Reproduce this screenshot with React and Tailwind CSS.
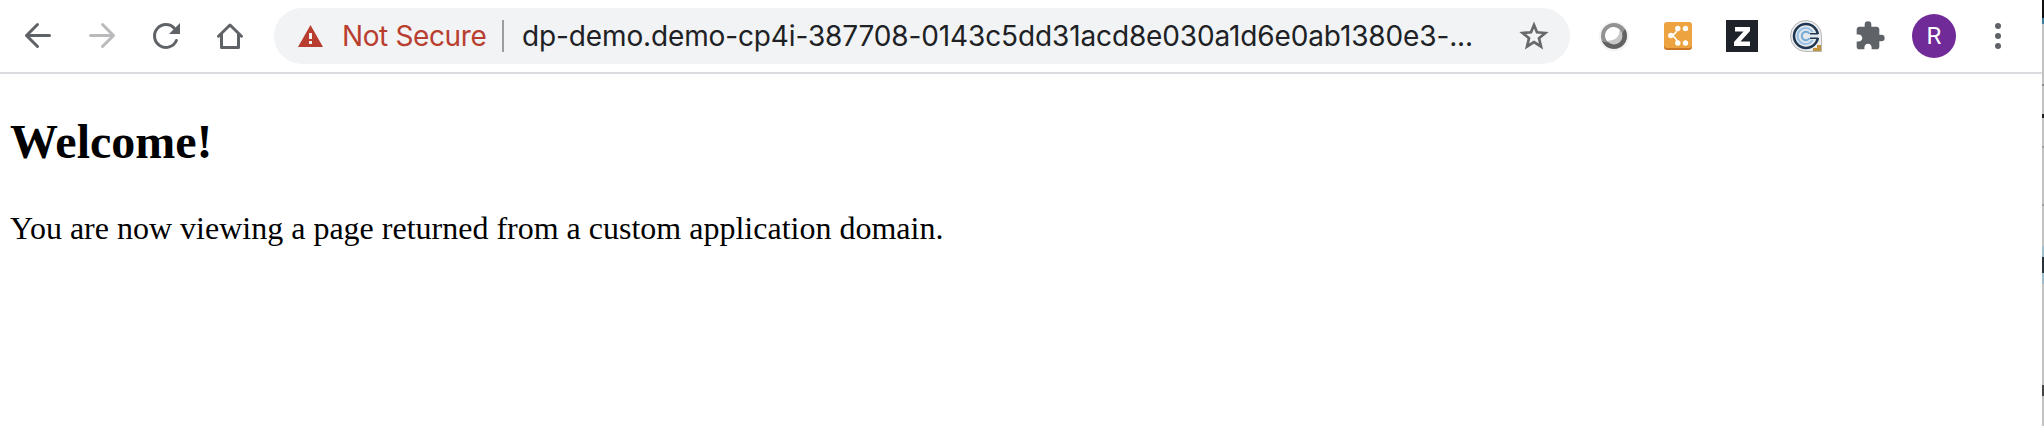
const iconButton = "h-8 w-8 shrink-0";

function Navigation() {
  return (
    <nav className="flex w-[274px] shrink-0 items-center gap-8 pl-[22px]">
      <svg className={iconButton} viewBox="0 0 32 32" fill="none" stroke="#5f6368" strokeWidth="3" strokeLinecap="round" strokeLinejoin="round">
        <path d="M27.5 15.5H4.5M15.5 4.5L4.5 15.5L15.5 26.5" />
      </svg>
      <svg className={iconButton} viewBox="0 0 32 32" fill="none" stroke="#bababc" strokeWidth="3" strokeLinecap="round" strokeLinejoin="round">
        <path d="M4.5 15.5H27.5M16.5 4.5L27.5 15.5L16.5 26.5" />
      </svg>
      <svg className={iconButton} viewBox="0 0 32 32" fill="none" stroke="#5f6368" strokeWidth="3" strokeLinecap="round">
        <path d="M26.4 20.5A11.4 11.4 0 1 1 24.5 8.5" />
        <path d="M30 3V14H19Z" fill="#5f6368" stroke="none" />
      </svg>
      <svg className={iconButton} viewBox="0 0 32 32" fill="none" stroke="#5f6368" strokeWidth="3" strokeLinecap="round" strokeLinejoin="round">
        <path d="M4.5 16.2L16 5L27.500 16.200M7.500 14V27.500H24.500V14" />
      </svg>
    </nav>
  );
}

function AddressBar() {
  return (
    <div className="flex h-14 w-[1296px] shrink-0 items-center rounded-full bg-[#f1f3f4] pl-6 font-['Inter',sans-serif] text-[28px] leading-none">
      <svg className="h-[22px] w-[25px] shrink-0" viewBox="0 0 25 22">
        <path d="M12.5 0L25 22H0Z" fill="#b83d2e" />
        <path d="M11 8H14V14H11ZM11 16H14V19H11Z" fill="#f1f3f4" />
      </svg>
      <span className="ml-[19px] w-[160px] whitespace-nowrap tracking-[-0.38px] text-[#b93e30]">Not Secure</span>
      <span className="h-8 w-0.5 shrink-0 bg-[#9b9da0]" />
      <span className="ml-[18px] w-[996px] whitespace-nowrap tracking-[-0.13px] text-[#202124]">dp-demo.demo-cp4i-387708-0143c5dd31acd8e030a1d6e0ab1380e3-...</span>
      <svg className="h-8 w-8 shrink-0" viewBox="0 0 32 32" fill="none" stroke="#66686b" strokeWidth="2.7">
        <path d="M16 5L19 12.300L27.300 13L21 18.300L23 26.500L16 22.100L9 26.500L11 18.300L4.700 13L13 12.300Z" />
      </svg>
    </div>
  );
}

function Extensions() {
  return (
    <div className="flex items-center pl-7">
      <svg className="h-8 w-8" viewBox="0 0 32 32">
        <circle cx="16" cy="16.500" r="15" fill="#f3f3f3" />
        <circle cx="16" cy="16" r="13" fill="#929292" />
        <path d="M27 9A13 13 0 1 1 4 21Q17 27 27 9Z" fill="#626262" />
        <circle cx="16" cy="16" r="8.500" fill="#c7c7c7" />
        <path d="M21.500 9.500Q22 20 9 21A8.500 8.500 0 0 1 21.500 9.500Z" fill="#fff" />
      </svg>
      <svg className="ml-8 h-8 w-8" viewBox="0 0 32 32">
        <rect x="2" y="3" width="28" height="27" rx="3" fill="#cb7728" />
        <rect x="2" y="2" width="28" height="26" rx="3" fill="#eda33f" />
        <path d="M15.500 8.500Q14.500 14 9 15.500Q14.500 17 15.500 23" fill="none" stroke="#fff" strokeWidth="1.500" />
        <g fill="#fff"><circle cx="15.800" cy="8.500" r="2.700" /><circle cx="23.500" cy="8.500" r="2.700" /><circle cx="8.800" cy="15.500" r="2.700" /><circle cx="15.800" cy="23" r="2.700" /><circle cx="23.500" cy="23" r="2.700" /></g>
      </svg>
      <svg className="ml-8 h-8 w-8" viewBox="0 0 32 32">
        <path d="M0 0H32V32H0Z" fill="#1e232a" />
        <path d="M9 7H24V11L14.500 21.500H24V26H8V22L17.500 11.500H9Z" fill="#fff" />
      </svg>
      <svg className="ml-8 h-8 w-8" viewBox="0 0 32 32">
        <path d="M16 .5A15.500 15.500 0 0 0 16 31.500H31.500V16A15.500 15.500 0 0 0 16 .5Z" fill="#ededed" stroke="#b8b8b8" />
        <circle cx="16" cy="16" r="12" fill="#e3e8ed" stroke="#203650" strokeWidth="2.500" />
        <path d="M22.500 12A8 8 0 1 0 22.500 20" fill="none" stroke="#9ac2e5" strokeWidth="2" />
        <path d="M19.500 13.700A4.200 4.200 0 1 0 19.500 18.300" fill="none" stroke="#73a9d2" strokeWidth="2" />
        <path d="M16 14H30V18H16Z" fill="#e3e8ed" />
        <path d="M20 13.700H28M20 18.300H28" stroke="#203650" strokeWidth="1.400" />
        <path d="M31 25V31H23V28H27V25Z" fill="#c4933d" />
      </svg>
      <svg className="ml-8 h-8 w-8" viewBox="0 0 24 24" fill="#5f6368">
        <path d="M20.500 11H19V7c0-1.100-.9-2-2-2h-4V3.500a2.500 2.500 0 0 0-5 0V5H4c-1.100 0-1.990.9-1.990 2v3.800H3.500c1.490 0 2.700 1.210 2.700 2.700s-1.210 2.700-2.700 2.700H2V20c0 1.100.9 2 2 2h3.800v-1.500c0-1.490 1.210-2.700 2.700-2.700s2.700 1.210 2.700 2.700V22H17c1.100 0 2-.9 2-2v-4h1.500a2.500 2.500 0 0 0 0-5z" />
      </svg>
      <span className="ml-[26px] flex h-11 w-11 items-center justify-center rounded-full bg-[#702b98] font-['Roboto',sans-serif] text-[24px] leading-none text-white">R</span>
      <svg className="ml-[26px] h-8 w-8" viewBox="0 0 32 32" fill="#5f6368">
        <circle cx="16" cy="6" r="3" /><circle cx="16" cy="16" r="3" /><circle cx="16" cy="26" r="3" />
      </svg>
    </div>
  );
}

function BackgroundWindowEdge() {
  return (
    <aside className="flex w-0.5 shrink-0 flex-col bg-[#c3c3c3]">
      <div className="h-[18px] bg-[#111]" />
      <div className="h-1.5 bg-[#397b9d]" />
      <div className="mt-[60px] h-0.5 bg-[#8c8c8c]" />
      <div className="mt-7 h-1 bg-[#222]" />
      <div className="mt-7 h-0.5 bg-[#a0a0a0]" />
      <div className="mt-14 h-0.5 bg-[#a0a0a0]" />
      <div className="mt-10 flex h-[38px] items-center bg-[#9fbdcc]"><div className="h-4 w-full bg-[#26313a]" /></div>
      <div className="mt-[101px] h-[11px] bg-[#444]" />
    </aside>
  );
}

export default function App() {
  return (
    <div className="flex h-[426px] w-[2044px] overflow-hidden bg-white">
      <div className="min-w-0 flex-1">
        <header className="flex h-[74px] items-center border-b-2 border-[#dadce0]">
          <Navigation />
          <AddressBar />
          <Extensions />
        </header>
        <main className="pl-2.5 pt-10 font-['Liberation_Serif',serif] text-black">
          <h2 className="text-[48px] font-bold leading-[56px]">Welcome!</h2>
          <p className="mt-10 text-[32px] leading-9">You are now viewing a page returned from a custom application domain.</p>
        </main>
      </div>
      <BackgroundWindowEdge />
    </div>
  );
}
